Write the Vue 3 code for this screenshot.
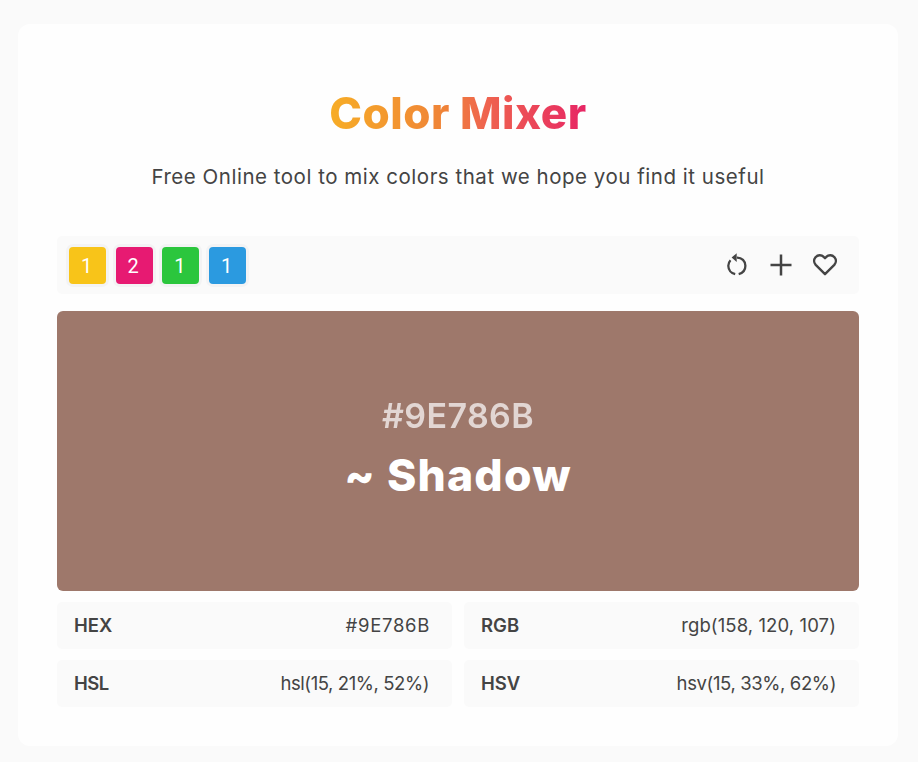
<script setup>
const swatches = [
  { color: '#f8c419', parts: 1 },
  { color: '#e71a72', parts: 2 },
  { color: '#2bc63d', parts: 1 },
  { color: '#2b9ae0', parts: 1 },
]
const formats = [
  { id: 'hex', label: 'HEX', value: '#9E786B' },
  { id: 'rgb', label: 'RGB', value: 'rgb(158, 120, 107)' },
  { id: 'hsl', label: 'HSL', value: 'hsl(15, 21%, 52%)' },
  { id: 'hsv', label: 'HSV', value: 'hsv(15, 33%, 62%)' },
]
</script>

<template>
  <main class="page">
    <section class="card">
      <h1><span class="title">Color Mixer</span></h1>
      <p class="subtitle"><span>Free Online tool to mix colors that we hope you find it useful</span></p>

      <div class="toolbar">
        <div class="swatches">
          <button v-for="(s, i) in swatches" :key="i" class="swatch" :style="{ backgroundColor: s.color }">{{ s.parts }}</button>
        </div>
        <div class="actions">
          <button class="action">
            <svg width="24" height="26" viewBox="0 0 24 26" fill="none" stroke="#444" stroke-width="2.3">
              <path d="M11 5.600C15.800 5.500 19.400 9.200 19.400 13.800C19.400 18 16.500 21.200 12.700 22.200" />
              <path d="M9.200 22.200C5.300 21.300 2.300 18 2.300 13.800C2.300 11.500 3.100 9.700 4.500 8.200" />
              <path d="M5.600 5.600L10.700 1.200V9.900Z" fill="#444" stroke="none" />
            </svg>
          </button>
          <button class="action">
            <svg width="24" height="26" viewBox="0 0 24 26" fill="none" stroke="#444" stroke-width="2.5">
              <path d="M1.500 13H22.500M12 2.500V23.500" />
            </svg>
          </button>
          <button class="action">
            <svg width="26" height="26" viewBox="0 0 26 26" fill="none" stroke="#444" stroke-width="2.400" stroke-linejoin="round">
              <path d="M13 22.200L3.700 12.900C1.700 10.700 1.600 7.500 3.500 5.200C5.600 2.700 9.500 2.600 11.700 4.900L13 6.200L14.300 4.900C16.500 2.600 20.400 2.700 22.500 5.200C24.400 7.500 24.300 10.700 22.300 12.900Z" />
            </svg>
          </button>
        </div>
      </div>

      <div class="preview">
        <div class="hex">#9E786B</div>
        <div class="name">~ Shadow</div>
      </div>

      <div class="formats">
        <div v-for="f in formats" :key="f.id" class="format">
          <strong :class="'label-' + f.id">{{ f.label }}</strong>
          <span :class="'value-' + f.id">{{ f.value }}</span>
        </div>
      </div>
    </section>
  </main>
</template>

<style>
body {
  background: #fafafa;
}
</style>

<style scoped>
.page {
  box-sizing: border-box;
  height: 762px;
  padding: 24px 20px 16px 18px;
  font-family: Inter, "Open Sans", sans-serif;
  color: #444;
}
.card {
  box-sizing: border-box;
  height: 722px;
  padding: 56px 39px 39px;
  border-radius: 12px;
  background: #fefefe;
}
h1 {
  margin: 0;
  height: 66px;
  line-height: 66px;
  text-align: center;
  font-size: 44px;
  font-weight: 800;
}
.title {
  display: inline-block;
  letter-spacing: 0.5px;
  background: linear-gradient(90deg, #f7ad26 0%, #ef8338 45%, #ef654e 60%, #e72565 100%);
  -webkit-background-clip: text;
  background-clip: text;
  color: transparent;
}
.subtitle {
  margin: 15px 0 0;
  height: 32px;
  line-height: 32px;
  text-align: center;
  font-size: 20.5px;
  letter-spacing: 0.52px;
  white-space: nowrap;
}
.toolbar {
  box-sizing: border-box;
  display: flex;
  align-items: center;
  justify-content: space-between;
  height: 58px;
  margin-top: 43px;
  padding: 0 21px 0 12px;
  border-radius: 5px;
  background: #fafafa;
}
.swatches {
  display: flex;
  gap: 9.700px;
}
.swatch {
  width: 37px;
  height: 37px;
  padding: 2px 2px 0 0;
  border: 0;
  border-radius: 4px;
  box-shadow: 0 0 0 3px #f3f3f4;
  color: #fff;
  font: 20px/35px Roboto, sans-serif;
}
.actions {
  display: flex;
  gap: 19px;
}
.action {
  display: flex;
  padding: 0;
  border: 0;
  background: none;
}
.preview {
  box-sizing: border-box;
  height: 280px;
  margin-top: 17px;
  padding-top: 80px;
  border-radius: 6px;
  background: #9e786b;
  text-align: center;
  color: #fff;
}
.hex {
  height: 50px;
  line-height: 50px;
  font-size: 34px;
  font-weight: 600;
  letter-spacing: 0.4px;
  opacity: 0.7;
}
.name {
  height: 68px;
  line-height: 68px;
  font-size: 44.5px;
  font-weight: 800;
  letter-spacing: 1.2px;
}
.formats {
  display: grid;
  grid-template-columns: 1fr 1fr;
  gap: 11px 12px;
  margin-top: 11px;
}
.format {
  box-sizing: border-box;
  display: flex;
  align-items: center;
  justify-content: space-between;
  height: 47px;
  padding: 0 23px 2px 17px;
  border-radius: 5px;
  background: #fafafa;
  font-size: 18.500px;
}
.format strong {
  font-weight: 600;
}
.format .label-hsl {
  letter-spacing: -0.5px;
}
.value-hex {
  letter-spacing: 0.700px;
  margin-right: -1px;
}
.value-rgb {
  letter-spacing: 0.100px;
}
.value-hsl {
  letter-spacing: -0.420px;
}
.value-hsv {
  letter-spacing: -0.380px;
}
</style>
